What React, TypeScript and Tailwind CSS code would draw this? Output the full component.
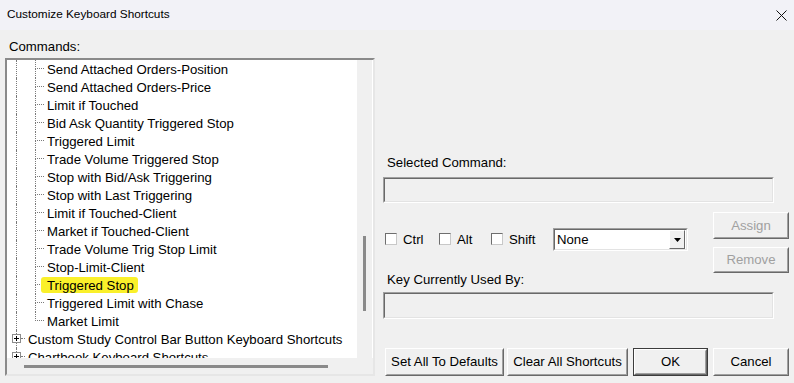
import React from 'react'

const items = [
  'Send Attached Orders-Position',
  'Send Attached Orders-Price',
  'Limit if Touched',
  'Bid Ask Quantity Triggered Stop',
  'Triggered Limit',
  'Trade Volume Triggered Stop',
  'Stop with Bid/Ask Triggering',
  'Stop with Last Triggering',
  'Limit if Touched-Client',
  'Market if Touched-Client',
  'Trade Volume Trig Stop Limit',
  'Stop-Limit-Client',
  'Triggered Stop',
  'Triggered Limit with Chase',
  'Market Limit'
]

function PlusBox() {
  return (
    <div className="w-[9px] h-[9px] border border-[#8c8c8c] bg-white flex items-center justify-center">
      <svg width="7" height="7" viewBox="0 0 7 7">
        <path d="M1 3.5h5M3.5 1v5" stroke="#000" strokeWidth="1" />
      </svg>
    </div>
  )
}

function Sunken({ className, children }: { className: string; children?: React.ReactNode }) {
  return (
    <div className={`border border-t-[#a0a0a0] border-l-[#a0a0a0] border-r-white border-b-white ${className}`}>
      <div className="w-full h-full border border-t-[#696969] border-l-[#696969] border-r-[#e3e3e3] border-b-[#e3e3e3]">
        {children}
      </div>
    </div>
  )
}

function Btn({ label, disabled, def, className }: { label: string; disabled?: boolean; def?: boolean; className: string }) {
  const inner = (
    <div className="w-full h-full border border-t-white border-l-white border-r-[#696969] border-b-[#696969]">
      <div
        className={`w-full h-full border border-t-[#f0f0f0] border-l-[#f0f0f0] border-r-[#a0a0a0] border-b-[#a0a0a0] flex items-center justify-center text-[13.2px] whitespace-nowrap ${
          disabled ? 'text-[#a0a0a0]' : 'text-black'
        }`}
      >
        {label}
      </div>
    </div>
  )
  return <div className={`bg-[#f0f0f0] ${def ? 'border border-[#3c3c3c]' : ''} ${className}`}>{inner}</div>
}

function Check({ label, w }: { label: string; w: string }) {
  return (
    <div className={`flex items-center ${w}`}>
      <div className="w-[12px] h-[12px] bg-white border border-t-[#6e6e6e] border-l-[#6e6e6e] border-r-[#c8c8c8] border-b-[#c8c8c8]" />
      <span className="ml-[6px]">{label}</span>
    </div>
  )
}

export default function App() {
  return (
    <div className="w-[794px] h-[383px] bg-[#f0f0f0] font-['Liberation_Sans',Arial,sans-serif] text-black overflow-hidden">
      {/* Title bar */}
      <div className="h-[30px] bg-[#f2f2f7] flex items-center justify-between pl-[7px] pr-[7px]">
        <span className="text-[11.8px]">Customize Keyboard Shortcuts</span>
        <svg width="11" height="11" viewBox="0 0 11 11">
          <path d="M0.5 0.5l10 10M10.5 0.5l-10 10" stroke="#111" strokeWidth="1" />
        </svg>
      </div>

      <div className="flex">
        {/* Commands tree */}
        <div className="pl-[5px] pt-[9px]">
          <div className="pl-[4px] h-[15px] leading-[15px] text-[13.2px] mb-[4px]">Commands:</div>
          <div className="w-[370px] h-[318px] border-2 border-t-[#8a8a8a] border-l-[#8a8a8a] border-r-[#e6e6e6] border-b-[#e6e6e6] flex flex-col">
            <div className="flex h-[298px]">
              <div className="w-[350px] h-full bg-white overflow-hidden text-[13.2px]">
                {items.map((t, i) => {
                  const last = i === items.length - 1
                  return (
                    <div key={i} className="h-[18px] flex leading-[19px]">
                      <div className="w-[19px] h-full">
                        <div className="ml-[9px] h-full border-l border-dotted border-[#7a7a7a]" />
                      </div>
                      <div className="w-[18px] h-full">
                        <div className="ml-[9px] w-[9px] h-[9px] border-l border-b border-dotted border-[#7a7a7a]" />
                        {!last && <div className="ml-[9px] h-[9px] border-l border-dotted border-[#7a7a7a]" />}
                      </div>
                      <span className="ml-[3px] relative whitespace-nowrap">
                        {t === 'Triggered Stop' && (
                          <span className="absolute -left-[6px] -right-[4px] top-[1px] bottom-[1px] bg-[#faf02a] rounded-[3px]" />
                        )}
                        <span className="relative">{t}</span>
                      </span>
                    </div>
                  )
                })}
                {['Custom Study Control Bar Button Keyboard Shortcuts', 'Chartbook Keyboard Shortcuts'].map((t) => (
                  <div key={t} className="h-[18px] flex leading-[19px]">
                    <div className="w-[19px] h-full flex flex-col">
                      <div className="ml-[9px] h-[4px] border-l border-dotted border-[#7a7a7a]" />
                      <div className="flex items-center ml-[5px]">
                        <PlusBox />
                        <div className="w-[4px] border-b border-dotted border-[#7a7a7a]" />
                      </div>
                      <div className="ml-[9px] flex-1 border-l border-dotted border-[#7a7a7a]" />
                    </div>
                    <span className="ml-[2px] whitespace-nowrap">{t}</span>
                  </div>
                ))}
              </div>
              {/* vertical scrollbar */}
              <div className="w-[16px] h-full bg-[#f0f0f0] border-r border-[#ffffff] flex flex-col items-center pt-[176px]">
                <div className="w-[3px] h-[75px] bg-[#8a8a8a]" />
              </div>
            </div>
            {/* horizontal scrollbar */}
            <div className="h-[16px] flex">
              <div className="w-[350px] h-full bg-[#f0f0f0] flex items-center pl-[17px]">
                <div className="w-[304px] h-[3px] bg-[#8a8a8a]" />
              </div>
              <div className="w-[16px] h-full bg-[#f0f0f0]" />
            </div>
          </div>
        </div>

        {/* Right panel */}
        <div className="ml-[8px] w-[406px] flex flex-col text-[13.2px]">
          <div className="mt-[125px] h-[15px] leading-[15px] pl-[4px]">Selected Command:</div>
          <Sunken className="mt-[7px] w-[391px] h-[26px]" />

          <div className="mt-[9px] flex">
            <div className="flex-1 flex flex-col">
              <div className="mt-[16px] flex items-center h-[23px] pl-[2px]">
                <Check label="Ctrl" w="w-[54px]" />
                <Check label="Alt" w="w-[52px]" />
                <Check label="Shift" w="w-[62px]" />
                <Sunken className="w-[135px] h-[23px] bg-white">
                  <div className="flex h-full items-center bg-white">
                    <span className="flex-1 pl-[2px] leading-[19px]">None</span>
                    <div className="w-[16px] h-[19px] mr-[1px] border border-t-white border-l-white border-r-[#696969] border-b-[#696969] bg-[#f0f0f0] flex items-center justify-center">
                      <svg width="7" height="4" viewBox="0 0 7 4">
                        <path d="M0 0h7L3.5 4z" fill="#000" />
                      </svg>
                    </div>
                  </div>
                </Sunken>
              </div>
              <div className="mt-[21px] h-[15px] leading-[15px] pl-[4px]">Key Currently Used By:</div>
            </div>
            <div className="w-[76px] flex flex-col">
              <Btn label="Assign" disabled className="h-[27px]" />
              <Btn label="Remove" disabled className="mt-[8px] h-[26px]" />
            </div>
          </div>

          <Sunken className="mt-[5px] w-[391px] h-[27px]" />

          <div className="mt-[29px] flex pl-[2px]">
            <Btn label="Set All To Defaults" className="w-[119px] h-[28px]" />
            <Btn label="Clear All Shortcuts" className="ml-[3px] w-[121px] h-[28px]" />
            <Btn label="OK" def className="ml-[5px] w-[75px] h-[28px]" />
            <Btn label="Cancel" className="ml-[5px] w-[76px] h-[28px]" />
          </div>
        </div>
      </div>
    </div>
  )
}
